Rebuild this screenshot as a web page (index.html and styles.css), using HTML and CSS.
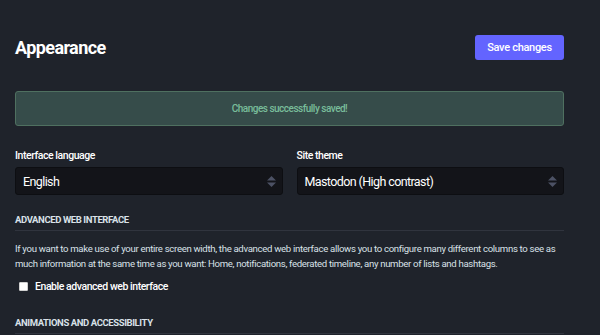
FILE: index.html
```html
<!DOCTYPE html>
<html lang="en">
<head>
    <meta charset="UTF-8">
    <meta name="viewport" content="width=device-width, initial-scale=1.0">
    <title>Appearance</title>
    <link rel="stylesheet" href="styles.css">
</head>
<body>
    <div class="content">
        <div class="content-heading">
            <h1>Appearance</h1>
            <button class="save-btn">Save changes</button>
        </div>

        <div class="flash-message">Changes successfully saved!</div>

        <div class="fields-row">
            <div class="field">
                <label class="field-label">Interface language</label>
                <div class="select-box">
                    <span>English</span>
                    <svg class="select-arrows" width="9" height="11" viewBox="0 0 9 11">
                        <path d="M4.5 0 L9 4.5 L0 4.5 Z" />
                        <path d="M0 6.5 L9 6.5 L4.5 11 Z" />
                    </svg>
                </div>
            </div>
            <div class="field">
                <label class="field-label">Site theme</label>
                <div class="select-box">
                    <span>Mastodon (High contrast)</span>
                    <svg class="select-arrows" width="9" height="11" viewBox="0 0 9 11">
                        <path d="M4.5 0 L9 4.5 L0 4.5 Z" />
                        <path d="M0 6.5 L9 6.5 L4.5 11 Z" />
                    </svg>
                </div>
            </div>
        </div>

        <h4 class="section-title">Advanced web interface</h4>
        <p class="hint">If you want to make use of your entire screen width, the advanced web interface allows you to configure many different columns to see as much information at the same time as you want: Home, notifications, federated timeline, any number of lists and hashtags.</p>

        <label class="check-row">
            <span class="check-box"></span>
            Enable advanced web interface
        </label>

        <h4 class="section-title">Animations and accessibility</h4>
    </div>
</body>
</html>
```

FILE: styles.css
```css
* {
    margin: 0;
    padding: 0;
    box-sizing: border-box;
}

body {
    font-family: Roboto, "Liberation Sans", sans-serif;
    background: #1f232b;
    color: #d9e1e8;
    overflow: hidden;
}

.content {
    width: 549px;
    margin-left: 15px;
    padding-top: 35px;
}

.content-heading {
    display: flex;
    align-items: center;
    justify-content: space-between;
}

h1 {
    font-size: 18px;
    font-weight: 700;
    line-height: 25px;
    color: #fff;
    letter-spacing: -0.6px;
}

.save-btn {
    width: 89px;
    height: 25px;
    border: none;
    border-radius: 3px;
    background: #6364ff;
    color: #fff;
    font-family: inherit;
    font-size: 11px;
    font-weight: 500;
    letter-spacing: -0.3px;
}

.flash-message {
    margin-top: 31px;
    height: 35px;
    display: flex;
    align-items: center;
    justify-content: center;
    background: #364c4a;
    border: 1px solid #4f7060;
    border-radius: 3px;
    color: #79bd9a;
    font-size: 10px;
    font-weight: 500;
    letter-spacing: -0.5px;
}

.fields-row {
    display: flex;
    gap: 14px;
    margin-top: 22px;
}

.field {
    flex: 1;
}

.field-label {
    display: block;
    font-size: 10.5px;
    font-weight: 500;
    line-height: 16px;
    letter-spacing: -0.45px;
    color: #fff;
    margin-bottom: 3px;
}

.select-box {
    height: 28px;
    display: flex;
    align-items: center;
    justify-content: space-between;
    padding: 0 6px 0 7px;
    background: #131419;
    border: 1px solid #0d0e12;
    border-radius: 3px;
    font-size: 12.5px;
    letter-spacing: -0.6px;
    color: #fff;
}

.select-arrows {
    fill: #4c5164;
}

.section-title {
    margin-top: 18px;
    font-size: 9.5px;
    font-weight: 700;
    line-height: 14px;
    letter-spacing: -0.4px;
    text-transform: uppercase;
    color: #d9e1e8;
    padding-bottom: 3px;
    border-bottom: 1px solid #30343e;
}

.hint {
    margin-top: 10px;
    font-size: 9.6px;
    line-height: 15px;
    letter-spacing: -0.32px;
    color: #d9e1e8;
}

.check-row {
    display: flex;
    align-items: center;
    gap: 7px;
    margin-top: 9px;
    padding-bottom: 5px;
    padding-left: 4px;
    font-size: 10.5px;
    font-weight: 500;
    letter-spacing: -0.45px;
    color: #fff;
}

.check-box {
    width: 9px;
    height: 9px;
    background: #fff;
    border: 1px solid #d0d0d0;
    border-radius: 1px;
}
```
